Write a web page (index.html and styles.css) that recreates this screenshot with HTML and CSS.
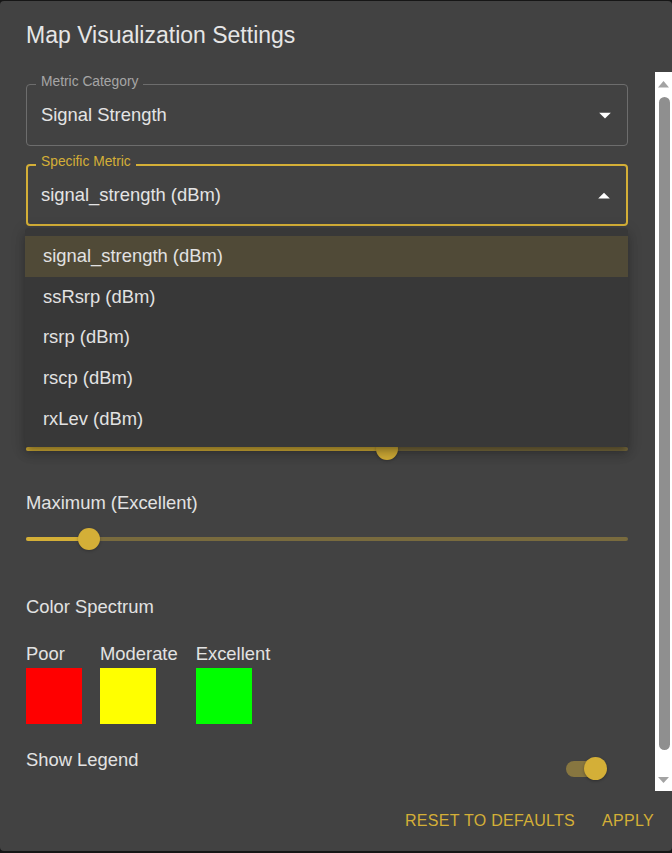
FILE: index.html
```html
<!DOCTYPE html>
<html lang="en">
<head>
<meta charset="utf-8">
<title>Map Visualization Settings</title>
<link rel="stylesheet" href="styles.css">
</head>
<body>
<div class="dialog">
  <h2 class="dialog-title">Map Visualization Settings</h2>
  <div class="dialog-body">
    <div class="content">
      <div class="field">
        <span class="field-label">Metric Category</span>
        <span class="field-value">Signal Strength</span>
        <svg class="field-arrow" viewBox="0 0 24 24"><path d="M7 10l5 5 5-5z"/></svg>
      </div>
      <div class="field field-focused">
        <span class="field-label">Specific Metric</span>
        <span class="field-value">signal_strength (dBm)</span>
        <svg class="field-arrow" viewBox="0 0 24 24"><path d="M7 15l5-5 5 5z"/></svg>
      </div>
      <div class="slider slider-hidden-label" aria-label="Minimum (Poor)">
        <div class="slider-rail"></div>
        <div class="slider-track" style="width:60%"></div>
        <div class="slider-thumb" style="left:60%"></div>
      </div>
      <div class="slider-block">
        <div class="slider-label">Maximum (Excellent)</div>
        <div class="slider">
          <div class="slider-rail"></div>
          <div class="slider-track" style="width:10.5%"></div>
          <div class="slider-thumb" style="left:10.5%"></div>
        </div>
      </div>
      <div class="section-title">Color Spectrum</div>
      <div class="swatches">
        <div class="swatch-col">
          <span class="swatch-label">Poor</span>
          <span class="swatch swatch-red"></span>
        </div>
        <div class="swatch-col">
          <span class="swatch-label">Moderate</span>
          <span class="swatch swatch-yellow"></span>
        </div>
        <div class="swatch-col">
          <span class="swatch-label">Excellent</span>
          <span class="swatch swatch-green"></span>
        </div>
      </div>
      <div class="legend-row">
        <span class="legend-label">Show Legend</span>
        <span class="switch"><span class="switch-track"></span><span class="switch-thumb"></span></span>
      </div>
    </div>
    <div class="scrollbar">
      <div class="sb-arrow sb-up"><svg viewBox="0 0 17 25" width="17" height="25"><polygon points="3,15.5 8.5,9 14,15.5"/></svg></div>
      <div class="sb-thumb"></div>
      <div class="sb-arrow sb-down"><svg viewBox="0 0 17 25" width="17" height="25"><polygon points="3,11 14,11 8.5,17"/></svg></div>
    </div>
  </div>
  <div class="actions">
    <button class="btn">Reset to Defaults</button>
    <button class="btn">Apply</button>
  </div>

  <ul class="menu">
    <li class="menu-item selected">signal_strength (dBm)</li>
    <li class="menu-item">ssRsrp (dBm)</li>
    <li class="menu-item">rsrp (dBm)</li>
    <li class="menu-item">rscp (dBm)</li>
    <li class="menu-item">rxLev (dBm)</li>
  </ul>
</div>
</body>
</html>
```

FILE: styles.css
```css
* { box-sizing: border-box; }

html, body {
  margin: 0;
  padding: 0;
  background: #161616;
  width: 672px;
  height: 853px;
  overflow: hidden;
  font-family: "Liberation Sans", Arial, sans-serif;
}

.dialog {
  position: relative;
  width: 672px;
  height: 850px;
  margin-top: 1px;
  background: #424242;
  border-radius: 4px;
  overflow: hidden;
  display: flex;
  flex-direction: column;
  color: #e2e2e2;
}

.dialog-title {
  margin: 0;
  height: 71px;
  padding: 18px 26px 0;
  font-size: 23px;
  line-height: 32px;
  font-weight: 400;
  color: #e6e6e6;
}

.dialog-body {
  display: flex;
  height: 719px;
}

.content {
  flex: 1;
  overflow: hidden;
  padding: 12px 27px 0 26px;
  font-size: 18.4px;
}

/* Outlined select field */
.field {
  position: relative;
  height: 62px;
  border: 1px solid #6d6d6d;
  border-radius: 4px;
  padding: 0 14px;
  display: flex;
  align-items: center;
}

.field + .field { margin-top: 18px; }

.field-focused {
  border: 2px solid #d4af37;
  padding: 0 13px;
}

.field-label {
  position: absolute;
  left: 9px;
  top: -11px;
  padding: 0 5px;
  background: #424242;
  font-size: 13.8px;
  line-height: 16px;
  color: #a6a6a6;
}

.field-focused .field-label {
  left: 8px;
  top: -12px;
  color: #d4af37;
}

.field-value {
  font-size: 18.4px;
  line-height: 22px;
  color: #e4e4e4;
}

.field-arrow {
  width: 28px;
  height: 28px;
  margin-left: auto;
  margin-right: -6px;
  fill: #ffffff;
}

.field-focused .field-arrow { margin-right: -5px; }

/* Sliders */
.slider-block { margin-top: 28px; }

.slider-label {
  line-height: 20px;
  color: #e2e2e2;
}

.slider {
  position: relative;
  height: 32px;
  margin-top: 10px;
}

.slider-hidden-label { margin-top: 207px; }

.slider-rail {
  position: absolute;
  left: 0;
  right: 0;
  top: 14px;
  height: 4px;
  border-radius: 2px;
  background: #796b3e;
}

.slider-track {
  position: absolute;
  left: 0;
  top: 14px;
  height: 4px;
  border-radius: 2px;
  background: #d4af37;
}

.slider-thumb {
  position: absolute;
  top: 16px;
  width: 22px;
  height: 22px;
  border-radius: 50%;
  background: #d4af37;
  transform: translate(-50%, -50%);
  box-shadow: 0 1px 3px rgba(0, 0, 0, 0.25);
}

/* Color spectrum */
.section-title {
  margin-top: 42px;
  line-height: 20px;
  color: #e2e2e2;
}

.swatches {
  display: flex;
  gap: 18px;
  margin-top: 27px;
}

.swatch-col {
  display: flex;
  flex-direction: column;
}

.swatch-label {
  line-height: 20px;
  color: #e2e2e2;
}

.swatch {
  display: block;
  width: 56px;
  height: 56px;
  margin-top: 4px;
}

.swatch-red { background: #ff0000; }
.swatch-yellow { background: #ffff00; }
.swatch-green { background: #00ff00; }

/* Legend switch */
.legend-row {
  display: flex;
  justify-content: space-between;
  align-items: flex-start;
  margin-top: 26px;
}

.legend-label {
  line-height: 20px;
  color: #e2e2e2;
}

.switch {
  position: relative;
  display: block;
  width: 41px;
  height: 23px;
  margin-top: 7px;
  margin-right: 21px;
}

.switch-track {
  position: absolute;
  left: 0;
  top: 3.5px;
  width: 36px;
  height: 16px;
  border-radius: 8px;
  background: #877640;
}

.switch-thumb {
  position: absolute;
  right: 0;
  top: 0;
  width: 23px;
  height: 23px;
  border-radius: 50%;
  background: #d4af37;
  box-shadow: 0 1px 3px rgba(0, 0, 0, 0.3);
}

/* Scrollbar */
.scrollbar {
  width: 17px;
  background: #ffffff;
  display: flex;
  flex-direction: column;
}

.sb-arrow {
  height: 25px;
  flex: none;
}

.sb-arrow svg {
  display: block;
  fill: #a3a3a3;
}

.sb-thumb {
  height: 653px;
  margin: 0 2px 0 4px;
  border-radius: 6px;
  background: #8f8f8f;
}

.sb-down { margin-top: auto; }

/* Actions */
.actions {
  height: 60px;
  display: flex;
  justify-content: flex-end;
  align-items: center;
  gap: 11px;
  padding-right: 10px;
}

.btn {
  background: none;
  border: 0;
  padding: 6px 8px;
  font-family: "Liberation Sans", Arial, sans-serif;
  font-size: 16px;
  line-height: 24px;
  text-transform: uppercase;
  color: #d4af37;
  letter-spacing: 0.3px;
}

/* Dropdown menu (popover) */
.menu {
  position: absolute;
  left: 25px;
  top: 227px;
  width: 603px;
  margin: 0;
  padding: 8px 0;
  list-style: none;
  background: #383838;
  border-radius: 4px;
  box-shadow: 0 5px 5px -3px rgba(0, 0, 0, 0.2), 0 8px 10px 1px rgba(0, 0, 0, 0.14), 0 3px 14px 2px rgba(0, 0, 0, 0.12);
}

.menu-item {
  height: 40.6px;
  padding: 0 18px;
  display: flex;
  align-items: center;
  font-size: 18.4px;
  color: #e2e2e2;
}

.menu-item.selected { background: #504a37; }
```
